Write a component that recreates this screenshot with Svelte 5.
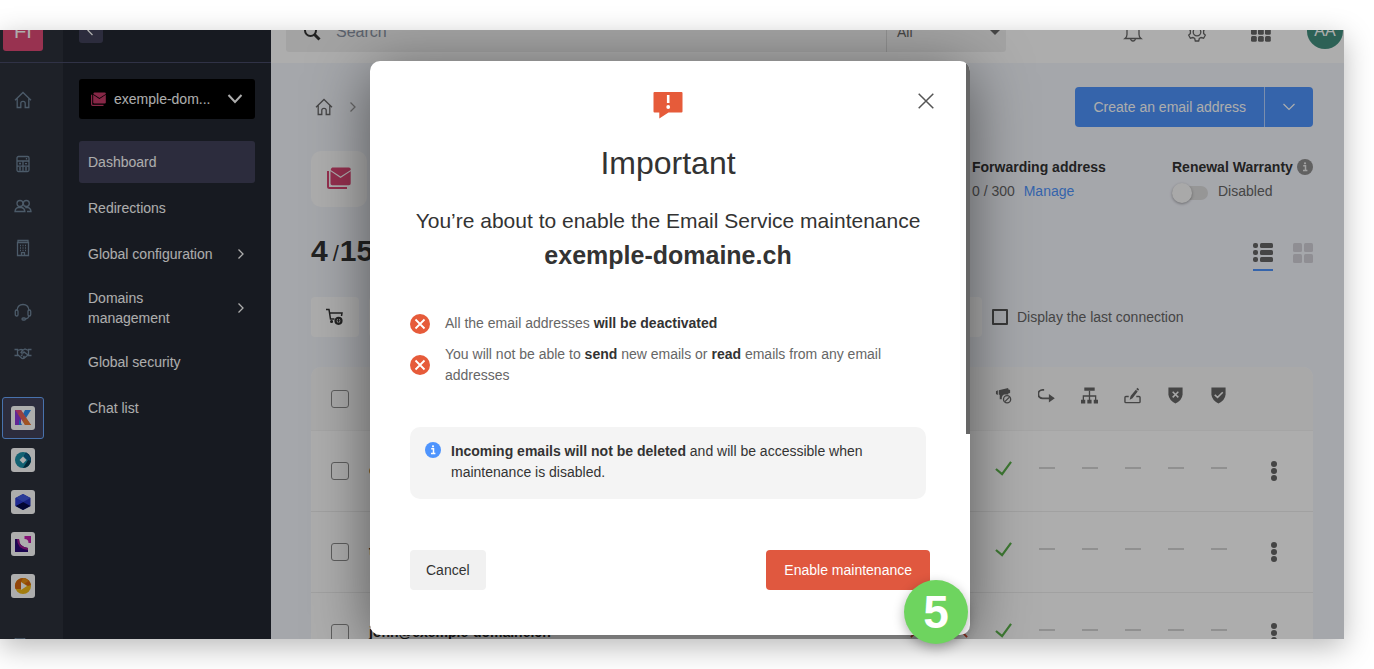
<script>
  const tools = [
    { name: 'Home', icon: 'home', gap: false },
    { name: 'Accounting', icon: 'calc', gap: true },
    { name: 'Users', icon: 'users', gap: false },
    { name: 'Organisation', icon: 'building', gap: false },
    { name: 'Support', icon: 'headset', gap: true },
    { name: 'Partners', icon: 'hands', gap: false },
  ];
  const products = ['kSuite', 'Hosting', 'Cloud', 'Events', 'Streaming'];
  const menu = [
    { label: 'Dashboard', active: true },
    { label: 'Redirections' },
    { label: 'Global configuration', more: true },
    { label: 'Domains management', more: true },
    { label: 'Global security' },
    { label: 'Chat list' },
  ];
  const emails = ['contact@exemple-domaine.ch', 'team@exemple-domaine.ch', 'john@exemple-domaine.ch'];
  const heads = ['away', 'filter', 'promo', 'forward', 'tree', 'sign', 'shieldx', 'shieldok'];
</script>

{#snippet mail()}
  <svg viewBox="0 0 24 22" aria-hidden="true">
    <path d="M1 4v15.500q0 1.500 1.500 1.500H20" fill="none" stroke="currentColor" stroke-width="2" />
    <path d="M4 4.500 13.500 11 23.700 4.200V16.500a1.800 1.800 0 0 1-1.800 1.800H5.300A1.800 1.800 0 0 1 3.500 16.500V4.200z" fill="currentColor" />
    <path d="M4 2.300A1.800 1.800 0 0 1 5.300.5h16.600a1.800 1.800 0 0 1 1.800 1.800v.600L13.600 9.500 3.600 2.900z" fill="currentColor" />
  </svg>
{/snippet}

{#snippet house()}
  <svg class="line" viewBox="0 0 18 18" aria-hidden="true"><path d="M1 9.300 9 1.500l8 7.800M3.200 7.500v9h3.600v-4.200q0-2 2.200-2t2.200 2v4.200h3.600v-9" /></svg>
{/snippet}

{#snippet chevron()}
  <svg class="line" viewBox="0 0 10 12" aria-hidden="true"><path d="m2.500 1.500 4.500 4.500-4.500 4.500" /></svg>
{/snippet}

{#snippet info()}
  <svg viewBox="0 0 16 16" aria-hidden="true">
    <circle cx="8" cy="8" r="8" fill="currentColor" />
    <path d="M6.200 6.800h2.300v4.400M6 11.500h4.400" fill="none" stroke="var(--dot)" stroke-width="1.500" />
    <circle cx="8" cy="4.300" r="1.100" fill="var(--dot)" />
  </svg>
{/snippet}

{#snippet tool(name)}
  {#if name === 'home'}
    {@render house()}
  {:else if name === 'calc'}
    <svg class="line" viewBox="0 0 18 18" aria-hidden="true"><rect x="3" y="1.500" width="12" height="15" rx="1.500" /><path d="M3 6h12M3 11.200h12M9 6v10.500M12.500 3v1.500M5 8.600h2M6 7.600v2M11 8.600h2M5 13h2M5 14.800h2M11 13h2M11 14.800h2" /></svg>
  {:else if name === 'users'}
    <svg class="line" viewBox="0 0 18 18" aria-hidden="true"><circle cx="6" cy="6.500" r="3" /><circle cx="12.300" cy="6.500" r="3" /><path d="M1 14.500q.300-3.500 3.500-4h3q3 .500 3.400 4zM13 14.500h4q-.300-3.500-3.500-4h-2.200" /></svg>
  {:else if name === 'building'}
    <svg class="line" viewBox="0 0 18 18" aria-hidden="true"><path d="M4 3.500V1.500h10v2M3.500 3.500h11v13h-11zM7.500 16.500v-2.800h3v2.800M6 6.500h1M8.500 6.500h1M11 6.500h1M6 9h1M8.500 9h1M11 9h1M6 11.500h1M8.500 11.500h1M11 11.500h1" /></svg>
  {:else if name === 'headset'}
    <svg class="line" viewBox="0 0 18 18" aria-hidden="true"><path d="M3 7.500q.500-6 6-6t6 6M15 12.500q-.300 3-3.500 3.500" /><rect x="1.300" y="7" width="2.700" height="6" rx="1.300" /><rect x="14" y="7" width="2.700" height="6" rx="1.300" /><rect x="8" y="15" width="3.500" height="2" rx="1" /></svg>
  {:else if name === 'hands'}
    <svg class="line" viewBox="0 0 18 18" aria-hidden="true"><path d="M.500 4.500h3v6h-3M17.500 4.500h-3v6h3M3.500 5.500 7 4.500l2 .500 2-1 3.500 1.500M9 5 7 7.500q1.500 1.500 3-.500l4 3M3.500 9.500l4.500 4q1.500.500 3-1l3-2.500M7 11l1.500-1.500M9 12.500l1.500-1.500" /></svg>
  {/if}
{/snippet}

{#snippet product(name)}
  <svg viewBox="0 0 24 24" aria-hidden="true">
    <rect width="24" height="24" rx="3" fill="#fff" />
    {#if name === 'kSuite'}
      <path d="M4 4h6v15H4z" fill="#8f39dc" />
      <path d="M14 4h6l-5 8-3-4zM8 13l3 6H8z" fill="#2e8df0" />
      <path d="M4 4h6l5 8-2.500 4z" fill="#e0478c" />
      <path d="m10 4 10 15h-6L7 8z" fill="#e2635c" />
      <path d="m15 12 5 7h-6l-2-4z" fill="#ee7c32" />
    {:else if name === 'Hosting'}
      <circle cx="12" cy="12" r="8" fill="#1b8fa8" />
      <path d="M15 4.600A8 8 0 0 1 12 20l5-8-4-4z" fill="#07384f" />
      <path d="m15 4.600 4 4.400q1 2 1 4l-3-1-4-4z" fill="#0b6190" />
      <path d="m12 8.500 3.500 3.500-3.500 3.500L8.500 12z" fill="#fff" />
    {:else if name === 'Cloud'}
      <path d="m12 4 7.500 4v8L12 20l-7.500-4V8z" fill="#2331bd" />
      <path d="m12 4 7.500 4-7.500 4-7.500-4z" fill="#4059df" />
      <path d="m12 12 7.500 4-7.500 4-7.500-4z" fill="#050a4a" />
      <path d="m4.500 8 7.500 4-7.500 4z" fill="#303fd8" />
    {:else if name === 'Events'}
      <path d="M4 7h4q0 8 9 9v4H4z" fill="#2a0a78" />
      <path d="M6 7h2q0 8 9 9v2Q6 17 6 7z" fill="#9c178e" />
      <path d="M13.500 4H20v7h-2.500q0-4-4-4z" fill="#c51cae" />
    {:else}
      <circle cx="12" cy="12" r="8" fill="#f0b916" />
      <path d="M12 4a8 8 0 0 0-7.500 11H10V8l7 4 3-1a8 8 0 0 0-8-7z" fill="#d7660f" />
      <path d="M12 4q3 0 5.500 3L13 10l-3-2z" fill="#e88f12" />
      <path d="m10 8 6 4-6 4z" fill="#fff" />
    {/if}
  </svg>
{/snippet}

{#snippet head(name)}
  {#if name === 'promo'}
    <svg viewBox="0 0 18 18" aria-hidden="true"><path d="M1 4.500 3 3.500v5L1 7.500zM4 3.500 14 1v1.500l2 .800v3l-2 .700V8L9.500 8q-2 1-2.300 3v2H5V8.300H4z" fill="currentColor" /><g fill="none" stroke="currentColor" stroke-width="1.400"><circle cx="12.800" cy="13" r="3.800" /><path d="m10.500 15.500 4.800-4.800" /></g></svg>
  {:else if name === 'forward'}
    <svg viewBox="0 0 18 18" aria-hidden="true"><path d="M6.500 3H4.800a3.800 3.800 0 0 0 0 9H14" fill="none" stroke="currentColor" stroke-width="2" /><path d="M11.500 7.500 17.800 12l-6.300 4.500z" fill="currentColor" /></svg>
  {:else if name === 'tree'}
    <svg viewBox="0 0 18 18" aria-hidden="true"><path d="M3.500.500h11V4h-11zM0 13.500h4.500v4H0zM6.700 13.500h4.500v4H6.700zM13.500 13.500H18v4h-4.500z" fill="currentColor" /><path d="M9 4v10M2.500 14V9.500h13V14" fill="none" stroke="currentColor" stroke-width="1.400" /></svg>
  {:else if name === 'sign'}
    <svg viewBox="0 0 18 18" aria-hidden="true"><path d="M5 10H2Q1 10 1 11v4.500q0 1 1 1h14q1 0 1-1V11q0-1-1-1h-3" fill="none" stroke="currentColor" stroke-width="1.500" /><path d="m6 13.500 1-4L12.500 3l2 1.800L9 12zM13 2.300 14 .700l2 1.800-1 1.400z" fill="currentColor" /></svg>
  {:else if name === 'shieldx'}
    <svg viewBox="0 0 18 18" aria-hidden="true"><path d="M1.500.500h15V8q-.500 6-7.500 9.500Q2 14 1.500 8z" fill="currentColor" /><path d="m6 5 6 6M12 5l-6 6" stroke="#f8f8f8" stroke-width="1.600" /></svg>
  {:else if name === 'shieldok'}
    <svg viewBox="0 0 18 18" aria-hidden="true"><path d="M1.500.500h15V8q-.500 6-7.500 9.500Q2 14 1.500 8z" fill="currentColor" /><path d="m5 8.300 3 2.700 5.500-5.500" fill="none" stroke="#f8f8f8" stroke-width="1.600" /></svg>
  {/if}
{/snippet}

<div class="page">
<div class="frame">
  <nav class="rail" aria-label="Products">
    <div class="rail-top"><span class="org">FI</span></div>
    <div class="rail-list">
      {#each tools as t}
        <a href="#top" class="rail-item" class:gap={t.gap} aria-label={t.name}>{@render tool(t.icon)}</a>
      {/each}
      {#each products as p, i}
        <a href="#top" class="rail-item product" class:gap={i === 0} class:active={i === 0} aria-label={p}>{@render product(p)}</a>
      {/each}
      <a href="#top" class="rail-item gap" aria-label="Files">
        <svg class="line last" viewBox="0 0 24 24" aria-hidden="true"><path d="M4 24V1.500Q4 0 6 0h6q2 0 2 2V4h7" /></svg>
      </a>
    </div>
  </nav>

  <aside class="panel">
    <div class="panel-top">
      <button class="back" aria-label="Collapse menu"><svg class="line" viewBox="0 0 10 12" aria-hidden="true"><path d="M6.500 1 2 5.500 6.500 10" /></svg></button>
    </div>
    <div class="panel-body">
      <button class="domain">
        <span class="domain-icon">{@render mail()}</span>
        <span>exemple-dom...</span>
        <svg class="down" viewBox="0 0 16 12" aria-hidden="true"><path d="m1.500 2 6.500 7 6.500-7" fill="none" stroke="currentColor" stroke-width="2" /></svg>
      </button>
      <nav class="menu" aria-label="Mail service">
        {#each menu as m}
          <a href="#top" class:on={m.active}>
            <span>{m.label}</span>
            {#if m.more}{@render chevron()}{/if}
          </a>
        {/each}
      </nav>
    </div>
  </aside>

  <main>
    <header>
      <div class="search">
        <svg class="glass" viewBox="0 0 18 18" aria-hidden="true"><circle cx="7.500" cy="7.500" r="5.500" fill="none" stroke="currentColor" stroke-width="2" /><path d="m11.500 11.500 5 5" stroke="currentColor" stroke-width="3" /></svg>
        <input type="text" placeholder="Search" aria-label="Search" />
        <button class="scope">All<i></i></button>
      </div>
      <div class="actions">
        <button aria-label="Notifications"><svg class="line" viewBox="0 0 20 20" aria-hidden="true"><path d="M2 16.500h16q-2-1.500-2-4V8q0-5.500-6-6-6 .500-6 6v4.500q0 2.500-2 4zM7.500 16.500q.300 2.500 2.500 2.500t2.500-2.500" /></svg></button>
        <button aria-label="Settings"><svg class="line" viewBox="0 0 20 20" aria-hidden="true"><circle cx="10" cy="10" r="3.800" /><path d="M8.300 1h3.400l.600 2.500 1.800 1 2.500-.700 1.700 3-1.700 1.800v2.800l1.700 1.800-1.700 3-2.500-.700-1.800 1-.600 2.500H8.300l-.600-2.500-1.800-1-2.500.700-1.700-3 1.700-1.800V8.600L1.700 6.800l1.700-3 2.500.700 1.800-1z" /></svg></button>
        <button aria-label="Applications"><svg viewBox="0 0 20 20" aria-hidden="true"><g fill="currentColor">{#each [0, 7, 14] as y}{#each [0, 7, 14] as x}<rect {x} {y} width="5.800" height="5.800" rx="1.500" />{/each}{/each}</g></svg></button>
        <span class="avatar">AA</span>
      </div>
    </header>

    <div class="content">
      <div class="crumb-row">
        <div class="crumbs"><a href="#top" aria-label="Home">{@render house()}</a>{@render chevron()}</div>
        <div class="create">
          <button>Create an email address</button>
          <button class="caret" aria-label="More"><svg viewBox="0 0 14 10" aria-hidden="true"><path d="m1.500 2 5.500 5.500L12.500 2" fill="none" stroke="currentColor" stroke-width="1.200" /></svg></button>
        </div>
      </div>

      <div class="summary">
        <div class="mail-card">{@render mail()}</div>
        <dl>
          <div class="fwd"><dt>Forwarding address</dt><dd>0 / 300 <a href="#top">Manage</a></dd></div>
          <div>
            <dt>Renewal Warranty <span class="info grey">{@render info()}</span></dt>
            <dd><label class="switch"><input type="checkbox" /><i></i>Disabled</label></dd>
          </div>
        </dl>
      </div>

      <div class="count-row">
        <h2>4<small>/</small>15</h2>
        <div class="views">
          <button class="current" aria-label="List view"><svg viewBox="0 0 20 20" aria-hidden="true"><g fill="currentColor">{#each [0, 7, 14] as y}<rect {y} width="5" height="5" rx="2" /><rect x="7" {y} width="13" height="5" rx="1.500" />{/each}</g></svg></button>
          <button class="grid-view" aria-label="Grid view"><svg viewBox="0 0 20 20" aria-hidden="true"><g fill="currentColor">{#each [0, 11] as y}{#each [0, 11] as x}<rect {x} {y} width="9" height="9" rx="1.500" />{/each}{/each}</g></svg></button>
        </div>
      </div>

      <div class="toolbar">
        <button class="cart" aria-label="Order addresses"><svg viewBox="0 0 18 18" aria-hidden="true"><path d="M0 1.500h3l1.500 9.500h4M4 5h12l-.500 3M5 13.500h2" fill="none" stroke="currentColor" stroke-width="1.500" /><circle cx="5.500" cy="13.500" r="1.500" fill="currentColor" /><circle cx="12.500" cy="12.800" r="3" fill="none" stroke="currentColor" stroke-width="2.200" /><path d="M12.500 11v3.500M10.700 12.800h3.600" stroke="currentColor" stroke-width="1" /></svg></button>
        <div class="filter"></div>
        <label class="last-seen"><input type="checkbox" />Display the last connection</label>
      </div>

      <table>
        <thead>
          <tr>
            <th class="pick"><input type="checkbox" aria-label="Select all" /></th>
            <th></th>
            {#each heads as h}<th class="state">{@render head(h)}</th>{/each}
            <th class="more"></th>
          </tr>
        </thead>
        <tbody>
          {#each emails as email}
            <tr>
              <td class="pick"><input type="checkbox" aria-label={email} /></td>
              <td class="email">{email}</td>
              {#each heads as h, i}
                <td class="state">
                  {#if i < 2}
                    <svg class="cross" viewBox="0 0 18 18" aria-hidden="true"><path d="m2 2 14 14M16 2 2 16" fill="none" stroke="currentColor" stroke-width="2" /></svg>
                  {:else if i === 2}
                    <svg class="tick" viewBox="0 0 18 18" aria-hidden="true"><path d="m1 9.500 6.500 5.500L17 2" fill="none" stroke="currentColor" stroke-width="2.300" /></svg>
                  {:else}
                    <i class="dash"></i>
                  {/if}
                </td>
              {/each}
              <td class="more"><button aria-label="Options"><i></i><i></i><i></i></button></td>
            </tr>
          {/each}
        </tbody>
      </table>
    </div>
  </main>

  <div class="backdrop">
    <div class="modal" role="dialog" aria-modal="true" aria-labelledby="modal-title">
      <div class="modal-body">
        <button class="close" aria-label="Close"><svg viewBox="0 0 16 16" aria-hidden="true"><path d="m.700.700 14.600 14.600M15.300.700.700 15.300" stroke="currentColor" stroke-width="1.500" /></svg></button>
        <svg class="alert" viewBox="0 0 30 28" aria-hidden="true"><path d="M1.500 1h27q1 0 1 1v18.500q0 1-1 1H15.500L6.300 27.500v-6H1.500q-1 0-1-1V2q0-1 1-1z" fill="#e65b3a" /><path d="M15.200 4v8" stroke="#fff" stroke-width="2.600" /><circle cx="15.200" cy="16" r="1.900" fill="#fff" /></svg>
        <h1 id="modal-title">Important</h1>
        <p class="lead">You’re about to enable the Email Service maintenance<strong>exemple-domaine.ch</strong></p>
        <ul>
          <li><svg viewBox="0 0 20 20" aria-hidden="true"><circle cx="10" cy="10" r="10" fill="#e65b3a" /><path d="m5.500 5.500 9 9M14.500 5.500l-9 9" stroke="#fff" stroke-width="1.800" /></svg><span>All the email addresses <b>will be deactivated</b></span></li>
          <li><svg viewBox="0 0 20 20" aria-hidden="true"><circle cx="10" cy="10" r="10" fill="#e65b3a" /><path d="m5.500 5.500 9 9M14.500 5.500l-9 9" stroke="#fff" stroke-width="1.800" /></svg><span>You will not be able to <b>send</b> new emails or <b>read</b> emails from any email addresses</span></li>
        </ul>
        <div class="note"><span class="info">{@render info()}</span><p><b>Incoming emails will not be deleted</b> and will be accessible when maintenance is disabled.</p></div>
        <div class="buttons"><button class="cancel">Cancel</button><button class="confirm">Enable maintenance</button></div>
      </div>
      <div class="thumb"></div>
    </div>
  </div>
  <span class="step">5</span>
</div>
</div>

<style>
  :global(body) { margin: 0; background: #fff; }
  * { box-sizing: border-box; }
  .page { display: flex; min-height: 100vh; padding: 30px 30px 30px 0; overflow: hidden; }
  .frame {
    position: relative; display: flex; flex: 1; min-width: 0; height: calc(100vh - 60px); min-height: 600px;
    font: 400 14px/20px "Liberation Sans", Arial, sans-serif; color: #333;
    box-shadow: 0 8px 28px rgba(0, 0, 0, .28);
  }
  button, input { font: inherit; color: inherit; margin: 0; }
  button { border: 0; padding: 0; background: none; }
  a { color: inherit; text-decoration: none; }
  svg { display: block; flex: none; }
  .line { fill: none; stroke: currentColor; stroke-width: 1.3; }

  .rail { display: flex; flex-direction: column; width: 63px; flex: none; background: #2d313c; color: #70869b; overflow: hidden; }
  .rail-top, .panel-top, header { display: flex; align-items: flex-end; flex: none; height: 33px; overflow: hidden; }
  .rail-top, .panel-top { border-bottom: 1px solid #484a68; }
  .rail-top { padding: 0 3px 11px; }
  .org { display: grid; place-items: center; width: 40px; height: 40px; flex: none; border-radius: 3px; background: #e04b76; color: #fff; font-size: 20px; }
  .rail-list { display: flex; flex-direction: column; padding: 16px 2px 0; }
  .rail-item { display: grid; place-items: center; width: 42px; height: 42px; flex: none; }
  .rail-item.gap { margin-top: 22px; }
  .rail-item :global(svg) { width: 18px; height: 18px; stroke-width: 1.3; }
  .product :global(svg), .rail-item .last { width: 24px; height: 24px; }
  .rail-item.active { border: 1px solid #6ba9ff; border-radius: 3px; background: #41425a; }

  .panel { width: 208px; flex: none; background: #232731; color: #fff; }
  .panel-top { padding: 0 16px 19px; }
  .back { display: grid; place-items: center; width: 24px; height: 24px; flex: none; border-radius: 3px; background: #41425a; }
  .back svg { width: 10px; height: 12px; }
  .panel-body { padding: 16px; }
  .domain { display: flex; align-items: center; gap: 8px; width: 100%; height: 40px; padding: 0 12px; border-radius: 3px; background: #000; white-space: nowrap; }
  .domain-icon { color: #c83a69; }
  .domain-icon :global(svg) { width: 15px; height: 14px; }
  .down { width: 16px; height: 12px; margin-left: auto; }
  .menu { display: flex; flex-direction: column; gap: 4px; margin-top: 22px; }
  .menu a { display: flex; align-items: center; justify-content: space-between; min-height: 42px; padding: 9px; border-radius: 3px; }
  .menu a span { max-width: 134px; }
  .menu :global(svg) { width: 10px; height: 12px; }
  .menu a.on { background: #41425a; }

  main { flex: 1; min-width: 0; display: flex; flex-direction: column; overflow: hidden; background: #f4f6fd; }
  header { justify-content: space-between; padding-left: 15px; background: #fff; }
  .search { display: flex; align-items: center; flex: 0 1 720px; height: 40px; margin-bottom: 11px; border-radius: 3px; background: #f1f1f1; }
  .glass { width: 18px; height: 18px; margin: 0 15px 0 17px; }
  .search input { flex: 1; min-width: 0; border: 0; outline: 0; padding: 0; background: none; font-size: 16px; }
  .search input::placeholder { color: #8790a0; opacity: 1; }
  .scope { display: flex; align-items: center; justify-content: space-between; width: 120px; height: 40px; padding: 0 5px 0 10px; border-left: 1px solid #d5d5d5; color: #666; text-align: left; }
  .scope i { border: 6px solid transparent; border-top-color: #666; border-bottom: 0; }
  .actions { display: flex; align-items: flex-end; gap: 44px; }
  .actions button { margin-bottom: 21px; color: #666; }
  .actions svg { width: 20px; height: 20px; }
  .avatar { display: grid; place-items: center; width: 36px; height: 36px; margin: 0 1px 14px -8px; border-radius: 50%; background: #43907f; color: #fff; font-size: 16px; }

  .content { padding: 24px 31px 0 40px; }
  .crumb-row, .count-row, .toolbar, .summary { display: flex; align-items: center; justify-content: space-between; }
  .crumb-row { height: 40px; }
  .crumbs { display: flex; align-items: center; gap: 15px; padding-left: 4px; color: #666; }
  .crumbs a :global(svg) { width: 18px; height: 18px; }
  .crumbs > :global(svg) { width: 10px; height: 12px; stroke: #999; }
  .create { display: flex; height: 40px; border-radius: 4px; overflow: hidden; background: #4e94fd; color: #fff; }
  .create button { padding: 0 18px; }
  .create .caret { width: 49px; padding: 0 17px; border-left: 1px solid #b5d1ff; }
  .create svg { width: 14px; height: 10px; }
  .summary { margin-top: 24px; align-items: flex-start; }
  .mail-card { display: grid; place-items: center; width: 56px; height: 56px; padding-bottom: 3px; border-radius: 10px; background: #fff; color: #da4674; }
  .mail-card :global(svg) { width: 24px; height: 22px; }
  dl { display: flex; margin: 6px 0 0; line-height: 20px; }
  .fwd { width: 200px; }
  dt { display: flex; align-items: center; justify-content: space-between; gap: 4px; width: 141px; font-weight: 700; white-space: nowrap; }
  dd { margin: 4px 0 0; color: #666; }
  dd a { margin-left: 5px; color: #4e94fd; }
  .info { --dot: #fff; color: #4e94fd; }
  .info :global(svg) { width: 16px; height: 16px; }
  .info.grey { --dot: #eee; color: #8f8f8f; }
  .switch { display: flex; align-items: center; gap: 10px; }
  .switch input { position: absolute; opacity: 0; }
  .switch i { display: flex; align-items: center; width: 36px; height: 14px; margin-top: 4px; border-radius: 7px; background: #ddd; }
  .switch i::before { content: ""; width: 20px; height: 20px; border-radius: 50%; background: #fafafa; box-shadow: 0 1px 3px rgba(0, 0, 0, .35); }
  .count-row { height: 54px; margin-top: 18px; }
  h2 { margin: 0; font-size: 30px; font-weight: 700; line-height: 40px; white-space: nowrap; }
  h2 small { margin: 0 1px 0 5px; font-size: 22px; font-weight: 400; }
  .views { display: flex; align-items: flex-start; gap: 20px; padding-top: 10px; }
  .views svg { width: 20px; height: 20px; }
  .views button { display: flex; align-items: flex-start; height: 28px; color: #666; }
  .views .current { border-bottom: 2px solid #4e94fd; }
  .views .grid-view { color: #d3d2d9; }
  .toolbar { height: 40px; margin-top: 18px; justify-content: flex-start; }
  .cart { display: grid; place-items: center; width: 48px; height: 40px; border-radius: 4px; background: #fff; }
  .cart svg { width: 18px; height: 18px; }
  .filter { flex: 1; height: 40px; margin-left: 10px; border-radius: 4px; background: #fff; }
  .last-seen { display: flex; align-items: center; gap: 9px; width: 331px; padding-left: 10px; color: #666; }
  input[type="checkbox"]:not(.switch input) { appearance: none; width: 18px; height: 18px; margin: 0; border: 1px solid #8b8b8b; border-radius: 3px; background: transparent; display: block; }
  .last-seen input[type="checkbox"]:not(.switch input) { width: 16px; height: 16px; border: 2px solid #555; border-radius: 1px; }

  table { width: 100%; margin-top: 30px; border-collapse: separate; border-spacing: 0; table-layout: fixed; border-radius: 10px 10px 0 0; background: #fff; overflow: hidden; }
  th, td { padding: 0; vertical-align: middle; }
  th { height: 64px; background: #fafafa; border-bottom: 1px solid #f4f4f4; }
  td { height: 81px; border-bottom: 1px solid #eee; }
  .pick { width: 58px; padding-left: 20px; }
  .email { font-weight: 700; color: #222; padding-bottom: 2px; }
  .state { width: 43px; color: #666; padding-bottom: 6px; }
  .state :global(svg) { width: 17px; height: 17px; margin: 0 auto; }
  .state .cross { color: #d64a31; }
  .state .tick { color: #5cb34c; }
  .dash { display: block; width: 16px; height: 2px; margin: 0 auto; background: #d5d5d5; }
  .more { width: 73px; padding-right: 6px; }
  .more button { display: flex; flex-direction: column; align-items: center; gap: 1px; margin: 0 auto; }
  .more i { width: 6px; height: 6px; border-radius: 50%; background: #666; }

  .backdrop { position: absolute; inset: 0; display: flex; justify-content: center; align-items: flex-start; padding: 31px 4px 4px 0; background: rgba(0, 0, 0, .32); overflow: hidden; }
  .modal { position: relative; width: 600px; border-radius: 10px; background: #fff; box-shadow: 0 10px 60px rgba(0, 0, 0, .5); }
  .modal-body { display: flex; flex-direction: column; padding: 30px 40px 45px; }
  .close { position: absolute; top: 32px; right: 36px; color: #555; }
  .close svg { width: 16px; height: 16px; }
  .alert { width: 30px; height: 28px; align-self: center; margin-right: 4px; }
  h1 { margin: 24px 4px 0 0; font-size: 32px; line-height: 40px; font-weight: 400; text-align: center; }
  .lead { margin: 22px 4px 0 0; font-size: 21px; line-height: 32px; text-align: center; }
  .lead strong { display: block; font-size: 25px; line-height: 36px; font-weight: 700; }
  ul { display: flex; flex-direction: column; gap: 10px; margin: 40px 0 0; padding: 0; list-style: none; color: #666; line-height: 21px; }
  li { display: flex; align-items: center; gap: 15px; }
  li svg { width: 20px; height: 20px; }
  b { font-weight: 700; color: #333; }
  .note { display: flex; gap: 10px; margin: 41px 4px 0 0; padding: 14px 15px; border-radius: 10px; background: #f4f4f4; line-height: 21px; }
  .note .info { padding-top: 1px; }
  .note p { margin: 0 0 2px; }
  .buttons { display: flex; justify-content: space-between; margin-top: 51px; }
  .buttons button { height: 40px; padding: 0 16px; border-radius: 4px; }
  .buttons .confirm { padding: 0 18px; background: #e0583f; color: #fff; }
  .cancel { background: #f1f1f1; }
  .thumb { position: absolute; top: 0; right: 0; width: 10px; height: 65%; overflow: hidden; border-top-right-radius: 10px; }
  .thumb::after { content: ""; position: absolute; inset: 0 0 0 auto; width: 4px; background: #666; }
  .step { position: absolute; left: calc(50% + 232px); bottom: -5px; display: grid; place-items: center; width: 64px; height: 64px; border-radius: 50%; background: #6ed45f; color: #fff; font-size: 46px; font-weight: 700; box-shadow: 0 4px 12px rgba(0, 0, 0, .3); }
</style>
